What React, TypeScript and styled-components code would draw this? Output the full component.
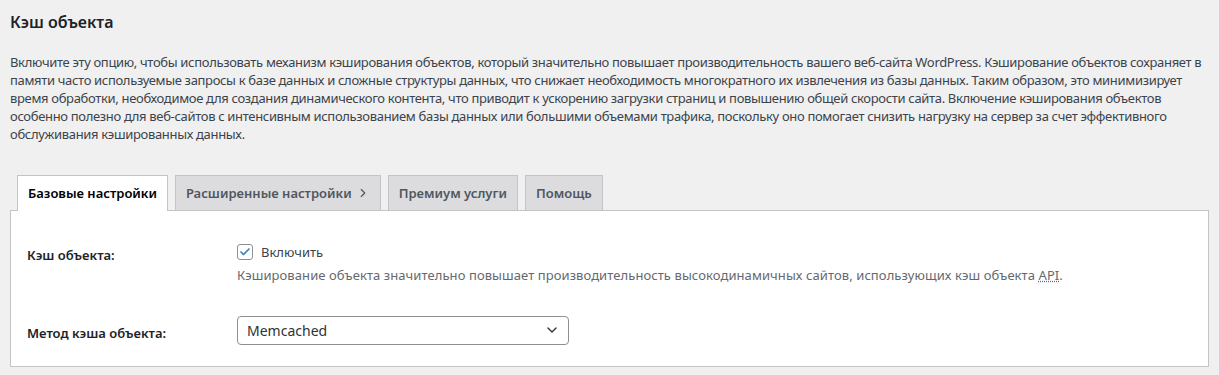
import styled, { createGlobalStyle } from "styled-components";
import { ChevronRight, ChevronDown, Check } from "lucide-react";

const GlobalStyle = createGlobalStyle`
  body {
    margin: 0;
    background: #f0f0f1;
    font-family: "Noto Sans", "Open Sans", sans-serif;
    color: #3c434a;
  }
`;

const Page = styled.div`
  padding: 0 10px 10px 10px;
`;

const Title = styled.h2`
  margin: 0;
  padding-top: 11px;
  font-size: 16px;
  font-weight: 600;
  line-height: 22px;
  color: #1d2327;
`;

const Intro = styled.p`
  margin: 19.5px 0 0 0;
  font-size: 13px;
  line-height: 18px;
  letter-spacing: -0.33px;
`;

const Tabs = styled.div`
  display: flex;
  gap: 7px;
  margin-top: 32px;
  padding-left: 7px;
`;

const Tab = styled.div<{ $active?: boolean }>`
  display: flex;
  align-items: center;
  gap: 4px;
  padding: 0 10px;
  font-size: 13px;
  font-weight: 600;
  border: 1px solid #c3c4c7;
  border-bottom: none;
  background: ${(p) => (p.$active ? "#fff" : "#dcdcde")};
  color: ${(p) => (p.$active ? "#000" : "#50575e")};
  margin-bottom: ${(p) => (p.$active ? "-1px" : "0")};
  height: ${(p) => (p.$active ? "35px" : "34px")};
  position: relative;
  z-index: 1;
`;

const Panel = styled.div`
  background: #fff;
  border: 1px solid #c3c4c7;
  padding: 30px 16px 21px 16px;
`;

const Row = styled.div<{ $gap?: number }>`
  display: grid;
  grid-template-columns: 210px 1fr;
  align-items: start;
  margin-top: ${(p) => p.$gap ?? 0}px;
`;

const Label = styled.div<{ $top: number }>`
  font-size: 13px;
  font-weight: 600;
  color: #1d2327;
  padding-top: ${(p) => p.$top}px;
`;

const Field = styled.div`
  display: flex;
  flex-direction: column;
`;

const CheckLine = styled.label`
  display: flex;
  align-items: center;
  gap: 8px;
  font-size: 13px;
  height: 22px;
`;

const Box = styled.span`
  width: 14px;
  height: 14px;
  border: 1px solid #8c8f94;
  border-radius: 3px;
  display: flex;
  align-items: center;
  justify-content: center;
  color: #3582c4;
  background: #fff;
`;

const Desc = styled.p`
  margin: 3px 0 0 0;
  font-size: 13px;
  color: #646970;
  line-height: 18px;
  letter-spacing: 0.08px;
`;

const Abbr = styled.abbr`
  text-decoration: underline dotted;
`;

const SelectBox = styled.div`
  display: flex;
  align-items: center;
  justify-content: space-between;
  box-sizing: border-box;
  width: 332px;
  height: 29px;
  padding: 0 8px 0 9px;
  border: 1px solid #8c8f94;
  border-radius: 4px;
  font-size: 14px;
  color: #2c3338;
`;

export default function App() {
  return (
    <Page>
      <GlobalStyle />
      <Title>Кэш объекта</Title>
      <Intro>
        Включите эту опцию, чтобы использовать механизм кэширования объектов, который значительно
        повышает производительность вашего веб-сайта WordPress. Кэширование объектов сохраняет в
        памяти часто используемые запросы к базе данных и сложные структуры данных, что снижает
        необходимость многократного их извлечения из базы данных. Таким образом, это минимизирует
        время обработки, необходимое для создания динамического контента, что приводит к ускорению
        загрузки страниц и повышению общей скорости сайта. Включение кэширования объектов особенно
        полезно для веб-сайтов с интенсивным использованием базы данных или большими объемами
        трафика, поскольку оно помогает снизить нагрузку на сервер за счет эффективного
        обслуживания кэшированных данных.
      </Intro>
      <Tabs>
        <Tab $active>Базовые настройки</Tab>
        <Tab>
          Расширенные настройки <ChevronRight size={14} strokeWidth={2} />
        </Tab>
        <Tab>Премиум услуги</Tab>
        <Tab>Помощь</Tab>
      </Tabs>
      <Panel>
        <Row>
          <Label $top={5}>Кэш объекта:</Label>
          <Field>
            <CheckLine>
              <Box>
                <Check size={12} strokeWidth={3.5} />
              </Box>
              Включить
            </CheckLine>
            <Desc>
              Кэширование объекта значительно повышает производительность высокодинамичных сайтов,
              использующих кэш объекта <Abbr>API</Abbr>.
            </Desc>
          </Field>
        </Row>
        <Row $gap={32}>
          <Label $top={8}>Метод кэша объекта:</Label>
          <Field>
            <SelectBox>
              Memcached
              <ChevronDown size={16} strokeWidth={2} />
            </SelectBox>
          </Field>
        </Row>
      </Panel>
    </Page>
  );
}
